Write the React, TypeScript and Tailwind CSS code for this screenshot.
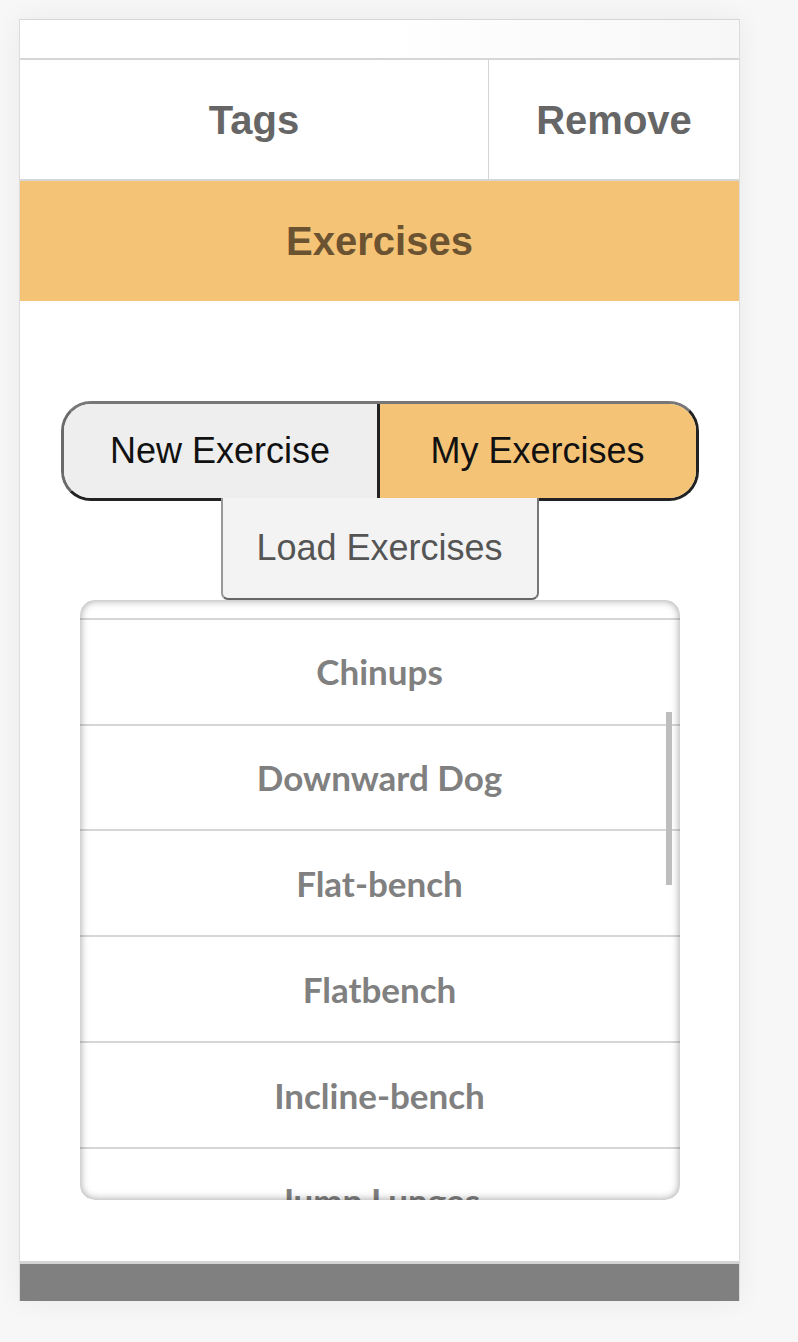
const EXERCISES = [
  "Bench Press",
  "Chinups",
  "Downward Dog",
  "Flat-bench",
  "Flatbench",
  "Incline-bench",
  "Jump Lunges",
];

export default function App() {
  return (
    <div className="min-h-[1342px] w-full bg-[#f7f7f7] pt-[19px]" style={{ fontFamily: '"Liberation Sans", Arial, sans-serif' }}>
      <div className="ml-[19px] w-[721px] border-x border-[#dcdcdc] bg-white shadow-[0_0_24px_rgba(0,0,0,0.06)]">
        {/* clipped row above */}
        <div className="h-[41px] overflow-hidden border-t border-b-2 border-[#d6d6d6] bg-gradient-to-r from-white via-white to-[#f7f7f7]" />

        {/* Tags / Remove */}
        <div className="flex h-[121px] border-b-2 border-[#d6d6d6]">
          <button className="flex w-[469px] items-center justify-center border-r border-[#d4d4d4] text-[40px] font-bold text-[#666666]">
            Tags
          </button>
          <button className="flex flex-1 items-center justify-center text-[40px] font-bold text-[#666666]">
            Remove
          </button>
        </div>

        {/* Section header */}
        <div className="flex h-[120px] items-center justify-center bg-[#f5c376]">
          <h2 className="text-[40px] font-bold text-[#6b5332]">Exercises</h2>
        </div>

        {/* Body */}
        <div className="flex h-[960px] flex-col items-center pt-[100px]">
          <div className="grid h-[100px] w-[638px] grid-cols-2 overflow-hidden rounded-[30px] border-[3px] border-t-[#777777] border-l-[#6a6a6a] border-r-[#222222] border-b-[#222222]">
            <button className="flex items-center justify-center border-r-[3px] border-[#222222] bg-[#eeeeee] text-[36px] text-[#111111]">
              New Exercise
            </button>
            <button className="flex items-center justify-center bg-[#f5c376] text-[36px] text-[#111111]">
              My Exercises
            </button>
          </div>

          <button className="-mt-[3px] flex h-[102px] w-[318px] items-center justify-center rounded-b-[7px] border-2 border-t-0 border-l-[#999999] border-r-[#777777] border-b-[#666666] bg-[#f3f3f3] text-[36px] text-[#555555]">
            Load Exercises
          </button>

          <div className="relative h-[600px] w-[600px] overflow-hidden rounded-[15px] bg-white">
            <div className="-mt-[86px]" style={{ fontFamily: '"Lato", "Open Sans", sans-serif' }}>
              {EXERCISES.map((name) => (
                <div
                  key={name}
                  className="flex h-[105.8px] items-center justify-center border-b-2 border-[#d6d6d6] text-[35px] font-bold text-[#808080]"
                >
                  {name}
                </div>
              ))}
            </div>
            <div className="pointer-events-none absolute inset-0 rounded-[15px] shadow-[inset_0_0_8px_rgba(0,0,0,0.4)]" />
            <div className="absolute right-[8px] top-[112px] h-[173px] w-[6px] bg-[#bdbdbd]" />
          </div>
        </div>

        {/* Footer bar */}
        <div className="h-[40px] border-t-[3px] border-[#d4d4d4] bg-[#808080]" />
      </div>
    </div>
  );
}
